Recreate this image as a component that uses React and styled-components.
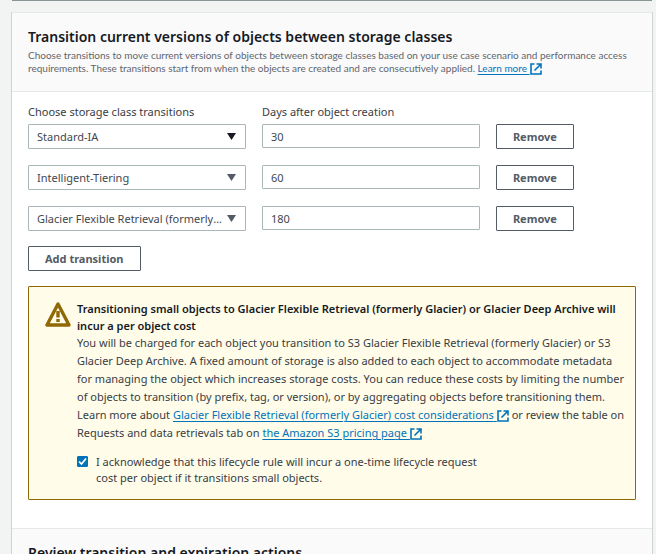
import React, { useState } from "react";
import styled, { createGlobalStyle } from "styled-components";

const GlobalStyle = createGlobalStyle`
  * { box-sizing: border-box; }
  body {
    margin: 0;
    background: #f2f3f3;
    color: #383d45;
    font: 11px/16px "Noto Sans", "Open Sans", sans-serif;
  }
  h2, p { margin: 0; }
`;

const Page = styled.main`
  height: 100vh;
  overflow: hidden;
  padding: 0 3px 0 11px;
`;

const PreviousPanelEdge = styled.div`
  height: 1px;
  margin: 0 1px 11px;
  background: #879596;
`;

const Panel = styled.div`
  background: #fff;
  border: solid #cfd3d3;
  border-width: 0 1px;
`;

const SectionHeader = styled.header`
  padding: 15px 16px 16px;
  background: #fafafa;
  border: solid #e4e8e8;
  border-width: 1px 0;
`;

const SectionTitle = styled.h2`
  color: #16191f;
  font-size: 14px;
  line-height: 18px;
  font-weight: 600;
`;

const Description = styled.p`
  margin-top: 3px;
  color: #5f666e;
  font-family: Lato, "Noto Sans", sans-serif;
  font-size: 10px;
  line-height: 13px;
`;

const SectionBody = styled.div`
  display: flex;
  flex-direction: column;
  align-items: flex-start;
  gap: 15px;
  padding: 12px 16px 28px;
`;

const TransitionGrid = styled.div`
  display: grid;
  grid-template-columns: 14fr 14fr 9fr;
  column-gap: 16px;
  width: 100%;
`;

const TransitionRow = styled(TransitionGrid)`
  align-items: start;
  margin-bottom: ${(p) => (p.$last ? "0" : "16px")};
`;

const Transitions = styled.div`
  width: 100%;
`;

const ColumnLabel = styled.label`
  padding-bottom: 4px;
`;

const SelectBox = styled.div`
  display: grid;
  align-items: center;
  min-width: 0;
  color: ${(p) => (p.$active ? "#16191f" : "#545b64")};

  > * { grid-area: 1 / 1; }
  > svg {
    justify-self: end;
    margin-right: 10px;
    pointer-events: none;
  }
`;

const Select = styled.select`
  appearance: none;
  width: 100%;
  height: 25px;
  padding: 0 22px 0 8px;
  border: 1px solid #aab7b8;
  border-radius: 1px;
  background: #fff;
  color: #414750;
  font: inherit;
  text-overflow: ellipsis;
  white-space: nowrap;
  overflow: hidden;
`;

const DaysInput = styled.input`
  width: 100%;
  min-width: 0;
  height: 24px;
  padding: 0 8px;
  border: 1px solid #aab7b8;
  border-radius: 1px;
  background: #fff;
  color: #414750;
  font: inherit;
`;

const Button = styled.button`
  justify-self: start;
  height: 25px;
  padding: 0 16px;
  border: 1px solid #545b64;
  border-radius: 1px;
  background: #fff;
  color: #545b64;
  font: inherit;
  font-weight: 700;
  white-space: nowrap;
`;

const Alert = styled.section`
  display: flex;
  align-items: flex-start;
  gap: 6px;
  width: 100%;
  padding: 13px 8px 13px 16px;
  border: 1px solid #906806;
  border-radius: 1px;
  background: #fffce9;

  > svg { flex: none; }
`;

const AlertContent = styled.div`
  min-width: 0;
  line-height: 18px;
`;

const AlertTitle = styled.p`
  color: #16191f;
  font-weight: 600;
  line-height: 17px;
`;

const Link = styled.a`
  color: #0073bb;
  text-decoration: underline;
  text-underline-offset: 2px;

  > svg { vertical-align: -3px; }
`;

const Acknowledge = styled.label`
  display: flex;
  align-items: flex-start;
  gap: 8px;
  max-width: 408px;
  margin-top: 12px;
  line-height: 16px;
`;

const CheckBox = styled.span`
  display: grid;
  flex: none;
  margin-top: 2px;

  > * { grid-area: 1 / 1; }
  > svg { pointer-events: none; }
`;

const CheckInput = styled.input`
  appearance: none;
  width: 11px;
  height: 11px;
  margin: 0;
  border: 1px solid #0073bb;
  border-radius: 1px;
  background: ${(p) => (p.checked ? "#0073bb" : "#fff")};
`;

const Caret = () => (
  <svg width="9" height="7" viewBox="0 0 9 7" aria-hidden="true">
    <path d="M0 0h9L4.5 7z" fill="currentColor" />
  </svg>
);

const ExternalIcon = () => (
  <svg width="12" height="12" viewBox="0 0 12 12" fill="none" stroke="#0073bb" strokeWidth="1.6" aria-hidden="true">
    <path d="M4.5 1H1v10h10V7.5M6.5 1H11v4.5M11 1 4.5 7.5" />
  </svg>
);

const WarningIcon = () => (
  <svg width="26" height="27" viewBox="0 0 26 27" fill="none" stroke="#906806" aria-hidden="true">
    <path d="M13 4 2 25h22z" strokeWidth="3.4" strokeLinejoin="round" />
    <path d="M13 11v6.5M13 19v3" strokeWidth="3.4" />
  </svg>
);

const ExternalLink = ({ href, children }) => (
  <Link href={href}>
    {children}&nbsp;
    <ExternalIcon />
  </Link>
);

const storageClasses = [
  "Standard-IA",
  "Intelligent-Tiering",
  "Glacier Flexible Retrieval (formerly Glacier)",
];

const initialTransitions = [
  { storage: storageClasses[0], days: "30" },
  { storage: storageClasses[1], days: "60" },
  { storage: storageClasses[2], days: "180" },
];

export default function App() {
  const [acknowledged, setAcknowledged] = useState(true);
  return (
    <>
      <GlobalStyle />
      <Page>
        <PreviousPanelEdge />
        <Panel>
          <SectionHeader>
            <SectionTitle>Transition current versions of objects between storage classes</SectionTitle>
            <Description>
              Choose transitions to move current versions of objects between storage classes based on your use case
              scenario and performance access<br />
              requirements. These transitions start from when the objects are created
              and are consecutively applied. <ExternalLink href="#learn-more">Learn more</ExternalLink>
            </Description>
          </SectionHeader>
          <SectionBody>
            <Transitions>
              <TransitionGrid>
                <ColumnLabel htmlFor="storage-0">Choose storage class transitions</ColumnLabel>
                <ColumnLabel htmlFor="days-0">Days after object creation</ColumnLabel>
              </TransitionGrid>
              {initialTransitions.map((t, i) => (
                <TransitionRow key={t.storage} $last={i === initialTransitions.length - 1}>
                  <SelectBox $active={i === 0}>
                    <Select id={`storage-${i}`} defaultValue={t.storage} aria-label="Choose storage class transitions">
                      {storageClasses.map((s) => (
                        <option key={s}>{s}</option>
                      ))}
                    </Select>
                    <Caret />
                  </SelectBox>
                  <DaysInput id={`days-${i}`} defaultValue={t.days} aria-label="Days after object creation" />
                  <Button type="button">Remove</Button>
                </TransitionRow>
              ))}
            </Transitions>
            <Button type="button">Add transition</Button>
            <Alert>
              <WarningIcon />
              <AlertContent>
                <AlertTitle>
                  Transitioning small objects to Glacier Flexible Retrieval (formerly Glacier) or Glacier Deep Archive
                  will<br />
                  incur a per object cost
                </AlertTitle>
                <p>
                  You will be charged for each object you transition to S3 Glacier Flexible Retrieval (formerly
                  Glacier) or S3<br />
                  Glacier Deep Archive. A fixed amount of storage is also added to each object to
                  accommodate metadata<br />
                  for managing the object which increases storage costs. You can reduce these
                  costs by limiting the number<br />
                  of objects to transition (by prefix, tag, or version), or by
                  aggregating objects before transitioning them.<br />
                  Learn more about{" "}
                  <ExternalLink href="#cost-considerations">
                    Glacier Flexible Retrieval (formerly Glacier) cost considerations
                  </ExternalLink>{" "}
                  or review the table on<br />
                  Requests and data retrievals tab on{" "}
                  <ExternalLink href="#pricing">the Amazon S3 pricing page</ExternalLink>
                </p>
                <Acknowledge>
                  <CheckBox>
                    <CheckInput
                      type="checkbox"
                      checked={acknowledged}
                      onChange={(e) => setAcknowledged(e.target.checked)}
                    />
                    {acknowledged && (
                      <svg width="11" height="11" viewBox="0 0 11 11" fill="none" stroke="#fff" strokeWidth="1.7" aria-hidden="true">
                        <path d="M2 5.5 4.5 8 9 2.5" />
                      </svg>
                    )}
                  </CheckBox>
                  <span>
                    I acknowledge that this lifecycle rule will incur a one-time lifecycle request cost per object if
                    it transitions small objects.
                  </span>
                </Acknowledge>
              </AlertContent>
            </Alert>
          </SectionBody>
          <SectionHeader>
            <SectionTitle>Review transition and expiration actions</SectionTitle>
          </SectionHeader>
        </Panel>
      </Page>
    </>
  );
}
